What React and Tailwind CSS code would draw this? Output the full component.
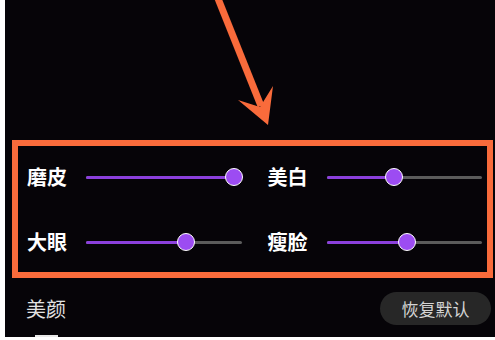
const sliders = [
  { label: "磨皮", value: 100 },
  { label: "美白", value: 43 },
  { label: "大眼", value: 66 },
  { label: "瘦脸", value: 52 },
];

function Slider({ value }) {
  // thumb travels inside the track, inset by its radius
  const pos = `calc(8px + (100% - 16px) * ${value / 100})`;
  return (
    <div className="relative h-[18px] flex-1 flex items-center">
      <div className="h-[3px] w-full rounded-full bg-[#5b5b5b] overflow-hidden">
        <div className="h-full bg-[#8b40dc]" style={{ width: pos }} />
      </div>
      <div
        className="absolute top-1/2 h-[18px] w-[18px] -translate-x-1/2 -translate-y-1/2 rounded-full border-[1.5px] border-white bg-[#9c4cf2]"
        style={{ left: pos }}
      />
    </div>
  );
}

export default function App() {
  return (
    <div
      className="w-[495px] h-[340px] bg-white pl-[5px] pb-[3px]"
      style={{ fontFamily: '"Noto Sans CJK SC", "Noto Sans", sans-serif' }}
    >
      <div className="h-full bg-[#060408] flex flex-col">
        <svg className="block h-[140px] w-full shrink-0" viewBox="0 0 490 140">
          <line x1="212" y1="-4" x2="256" y2="106" stroke="#f96b3b" strokeWidth="7" />
          <polygon points="263,125 233,100 255,107 268,86" fill="#f96b3b" />
        </svg>

        <div className="ml-[7px] mr-[2px] h-[138px] shrink-0 border-[6px] border-[#f96b3b] grid grid-cols-2 gap-x-[26px] gap-y-[35px] content-start pl-[9px] pr-[5px] pt-[16px]">
          {sliders.map((s) => (
            <div key={s.label} className="flex items-center h-[30px]">
              <span className="w-[59px] shrink-0 text-[20px] leading-[30px] font-bold text-white">{s.label}</span>
              <Slider value={s.value} />
            </div>
          ))}
        </div>

        <div className="relative flex-1 flex items-start justify-between pl-[21px] pr-[4px] pt-[14px]">
          <span className="h-[33px] flex items-center text-[20px] text-[#e2e2e2]">美颜</span>
          <button className="h-[33px] w-[111px] rounded-full bg-[#272727] text-[17px] text-[#d4d4d4] flex items-center justify-center">
            恢复默认
          </button>
          <div className="absolute left-[30px] bottom-0 h-[2px] w-[23px] bg-[#e8e8e8]" />
        </div>
      </div>
    </div>
  );
}
